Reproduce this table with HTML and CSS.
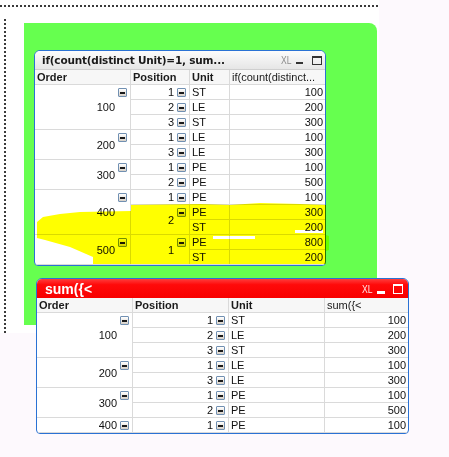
FILE: index.html
```html
<!DOCTYPE html>
<html>
<head>
<meta charset="utf-8">
<title>Tables</title>
<link rel="stylesheet" href="styles.css">
</head>
<body>
<div class="page">
  <div class="sheet">
    <div class="hline"></div>
    <div class="main">
      <div class="vline"></div>
      <div class="green">
        <div class="win win1">
          <div class="cap cap1">
            <span class="title">if(count(distinct Unit)=1, sum...</span>
            <span class="ctrls"><span class="xl">XL</span><span class="min"></span><span class="max"></span></span>
          </div>
          <div class="grid g1">
            <div class="c h">Order</div><div class="c h">Position</div><div class="c h">Unit</div><div class="c h e last">if(count(distinct...</div>

            <div class="c grp r3">100<i class="tg"></i></div><div class="c pos">1<i class="tg"></i></div><div class="c">ST</div><div class="c n last">100</div>
            <div class="c pos">2<i class="tg"></i></div><div class="c">LE</div><div class="c n last">200</div>
            <div class="c pos">3<i class="tg"></i></div><div class="c">ST</div><div class="c n last">300</div>

            <div class="c grp r2">200<i class="tg"></i></div><div class="c pos">1<i class="tg"></i></div><div class="c">LE</div><div class="c n last">100</div>
            <div class="c pos">3<i class="tg"></i></div><div class="c">LE</div><div class="c n last">300</div>

            <div class="c grp r2">300<i class="tg"></i></div><div class="c pos">1<i class="tg"></i></div><div class="c">PE</div><div class="c n last">100</div>
            <div class="c pos">2<i class="tg"></i></div><div class="c">PE</div><div class="c n last">500</div>

            <div class="c grp r3">400<i class="tg"></i></div><div class="c pos">1<i class="tg"></i></div><div class="c">PE</div><div class="c n last">100</div>
            <div class="c pos r2">2<i class="tg"></i></div><div class="c">PE</div><div class="c n last">300</div>
            <div class="c">ST</div><div class="c n last">200</div>

            <div class="c grp r2">500<i class="tg"></i></div><div class="c pos r2">1<i class="tg"></i></div><div class="c">PE</div><div class="c n last">800</div>
            <div class="c">ST</div><div class="c n last">200</div>
          </div>
        </div>
      </div>
    </div>
  </div>

  <div class="win win2">
    <div class="cap cap2">
      <span class="title2">sum({&lt;</span>
      <span class="ctrls ctrls2"><span class="xl">XL</span><span class="min"></span><span class="max"></span></span>
    </div>
    <div class="grid g2">
      <div class="c h">Order</div><div class="c h">Position</div><div class="c h">Unit</div><div class="c h e last">sum({&lt;</div>

      <div class="c grp r3">100<i class="tg"></i></div><div class="c pos">1<i class="tg"></i></div><div class="c">ST</div><div class="c n last">100</div>
      <div class="c pos">2<i class="tg"></i></div><div class="c">LE</div><div class="c n last">200</div>
      <div class="c pos">3<i class="tg"></i></div><div class="c">ST</div><div class="c n last">300</div>

      <div class="c grp r2">200<i class="tg"></i></div><div class="c pos">1<i class="tg"></i></div><div class="c">LE</div><div class="c n last">100</div>
      <div class="c pos">3<i class="tg"></i></div><div class="c">LE</div><div class="c n last">300</div>

      <div class="c grp r2">300<i class="tg"></i></div><div class="c pos">1<i class="tg"></i></div><div class="c">PE</div><div class="c n last">100</div>
      <div class="c pos">2<i class="tg"></i></div><div class="c">PE</div><div class="c n last">500</div>

      <div class="c grp">400<i class="tg"></i></div><div class="c pos">1<i class="tg"></i></div><div class="c">PE</div><div class="c n last">100</div>
    </div>
  </div>

  <svg class="marker" width="449" height="457" viewBox="0 0 449 457">
    <polygon fill="#ffff00" points="37,222 43,217 60,214 80,212 131,211 131,205 200,204 230,205 260,203 300,204 326,205 326,235 329,236 329,250 326,251 326,264 93,264 93,257 70,247 45,240 37,238"/>
    <rect x="295" y="230" width="28" height="3" fill="#ffffff"/>
    <rect x="213" y="236" width="42" height="3" fill="#ffffff"/>
  </svg>
</div>
</body>
</html>
```

FILE: styles.css
```css
* { box-sizing: border-box; margin: 0; padding: 0; }

body {
  margin: 0;
  background: #fdf9fd;
  font-family: "Liberation Sans", Arial, sans-serif;
}

.page {
  position: relative;
  width: 449px;
  height: 457px;
  overflow: hidden;
  background: #fdf9fd;
}

.sheet {
  width: 379px;
  height: 333px;
  background: #ffffff;
  padding-top: 5px;
}

.hline {
  width: 378px;
  height: 2px;
  background: repeating-linear-gradient(90deg, #3a3a3a 0 2px, transparent 2px 4px);
}

.main {
  display: flex;
  align-items: flex-start;
}

.vline {
  margin: 12px 0 0 4px;
  width: 2px;
  height: 314px;
  background: repeating-linear-gradient(180deg, #3a3a3a 0 2px, transparent 2px 4px);
}

.green {
  margin: 16px 0 0 18px;
  width: 353px;
  height: 302px;
  background: #66ff4f;
  border-top-right-radius: 8px;
  padding: 27px 0 0 10px;
}

.win {
  background: #ffffff;
  border: 1px solid #2a72d4;
  border-radius: 6px 6px 4px 4px;
  overflow: hidden;
}

.win1 { width: 292px; }

.win2 {
  position: absolute;
  left: 36px;
  top: 278px;
  width: 373px;
}

.cap {
  display: flex;
  align-items: center;
  justify-content: space-between;
  height: 19px;
}

.cap1 {
  background: linear-gradient(#fcfcfc, #e6e6e6);
  border-bottom: 1px solid #cfcfcf;
  padding: 0 3px 0 7px;
}

.title {
  font: bold 10.5px "DejaVu Sans", sans-serif;
  letter-spacing: -0.2px;
  color: #1a1a1a;
  white-space: nowrap;
}

.cap2 {
  background: linear-gradient(#ff3c3c 0, #ff0a0a 30%, #f80000 100%);
  padding: 0 5px 0 8px;
}

.title2 {
  font: bold 14px "Liberation Sans", Arial, sans-serif;
  color: #ffffff;
  white-space: nowrap;
}

.ctrls {
  display: flex;
  align-items: flex-end;
  height: 10px;
  color: #7a7a7a;
}

.ctrls .xl {
  display: inline-block;
  font: 11px/10px "Liberation Sans", Arial, sans-serif;
  transform: scaleX(0.78);
  transform-origin: left center;
  width: 11px;
  margin-right: 4px;
  color: #8c8c8c;
}

.ctrls .min {
  width: 7px;
  height: 2px;
  background: #333;
  margin-right: 9px;
  margin-bottom: 1px;
}

.ctrls .max {
  width: 10px;
  height: 9px;
  border: 1px solid #333;
  border-top-width: 2px;
}

.ctrls2 .xl { color: #ffe8e8; }
.ctrls2 .min { background: #ffffff; width: 8px; height: 3px; margin-right: 8px; margin-bottom: 0; }
.ctrls2 .max { border-color: #ffffff; height: 10px; width: 10px; }

.grid {
  display: grid;
  grid-auto-rows: 15px;
}

.g1 { grid-template-columns: 96px 59px 40px 95px; }
.g2 { grid-template-columns: 96px 96px 96px 83px; }

.c {
  border-right: 1px solid #dadada;
  border-bottom: 1px solid #dadada;
  padding: 0 2px;
  font-size: 11px;
  line-height: 14px;
  color: #111;
  white-space: nowrap;
  overflow: hidden;
}

.c.last { border-right: none; }

.h {
  font-weight: bold;
  background: #f7f7f7;
  color: #1a1a1a;
}

.h.e { font-weight: normal; }

.n { text-align: right; }

.grp, .pos {
  position: relative;
  display: flex;
  align-items: center;
  justify-content: flex-end;
  padding-right: 15px;
}

.r2 { grid-row: span 2; }
.r3 { grid-row: span 3; }

.tg {
  position: absolute;
  top: 3px;
  right: 3px;
  width: 9px;
  height: 9px;
  border: 1px solid #7190b2;
  border-radius: 1px;
  background: linear-gradient(#ffffff, #d6d0c8);
  display: flex;
  align-items: center;
  justify-content: center;
}

.tg::before {
  content: "";
  width: 5px;
  height: 2px;
  background: #1a1a1a;
}

.marker {
  position: absolute;
  left: 0;
  top: 0;
  mix-blend-mode: multiply;
  pointer-events: none;
}
```
